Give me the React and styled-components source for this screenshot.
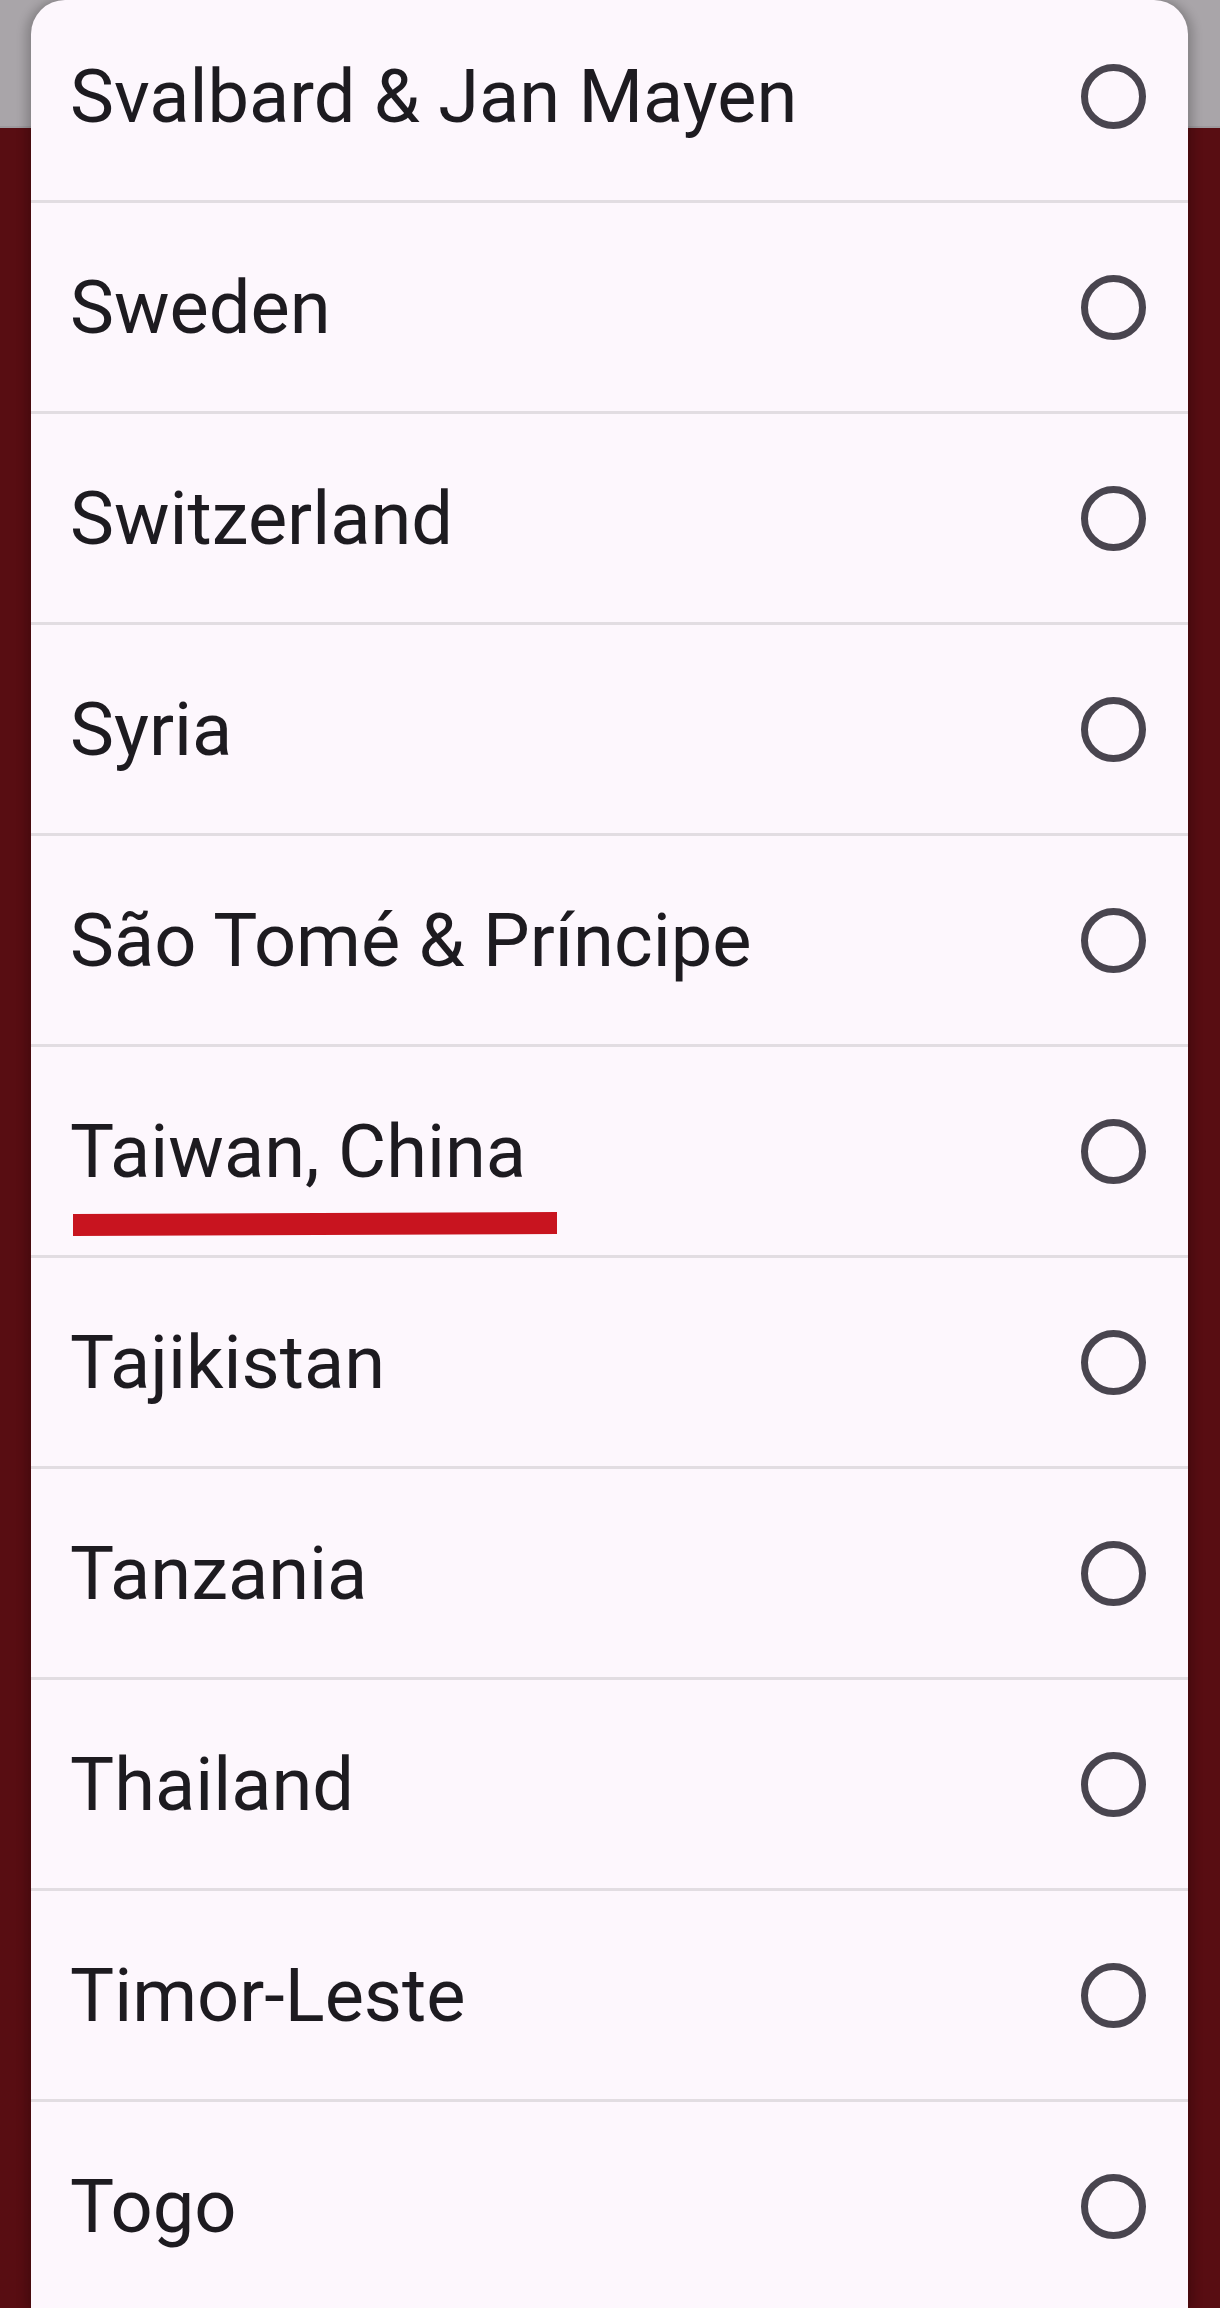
import React from "react";
import styled, { createGlobalStyle } from "styled-components";

const Global = createGlobalStyle`
  html, body { margin: 0; padding: 0; }
  body { font-family: Roboto, "Noto Sans", sans-serif; }
`;

const Page = styled.div`
  width: 1220px;
  height: 2308px;
  overflow: hidden;
  background: linear-gradient(#a9a5a9 0 126px, #9e9a9e 126px 128px, #580d12 128px);
  padding: 0 32px 0 31px;
  box-sizing: border-box;
`;

const Sheet = styled.div`
  background: #fdf7fd;
  height: 100%;
  border-radius: 34px 34px 0 0;
  overflow: hidden;
  box-shadow: -6px 0 10px rgba(0, 0, 0, 0.18), 6px 0 10px rgba(0, 0, 0, 0.18);
`;

const List = styled.ul`
  list-style: none;
  margin: -8px 0 0;
  padding: 0;
`;

const Row = styled.li`
  position: relative;
  height: 208px;
  border-bottom: 3px solid #e2dde2;
  display: flex;
  align-items: center;
  justify-content: space-between;
  padding: 0 42px 0 39px;
`;

const Label = styled.span`
  font-family: Roboto, "Noto Sans", sans-serif;
  font-size: 74px;
  color: #1d1b20;
  letter-spacing: 0;
`;

const Radio = styled.span`
  width: 65px;
  height: 65px;
  border-radius: 50%;
  border: 7px solid #49454f;
  box-sizing: border-box;
  flex: none;
`;

const Mark = styled.svg`
  position: absolute;
  left: 42px;
  top: 165px;
  width: 484px;
  height: 24px;
`;

const countries = [
  "Svalbard & Jan Mayen",
  "Sweden",
  "Switzerland",
  "Syria",
  "São Tomé & Príncipe",
  "Taiwan, China",
  "Tajikistan",
  "Tanzania",
  "Thailand",
  "Timor-Leste",
  "Togo",
];

export default function App() {
  return (
    <>
      <Global />
      <Page>
        <Sheet>
          <List>
            {countries.map((c) => (
              <Row key={c}>
                <Label>{c}</Label>
                <Radio />
                {c === "Taiwan, China" && (
                  <Mark viewBox="0 0 484 24">
                    <polygon points="0,2 484,0 484,22 0,24" fill="#c8141f" />
                  </Mark>
                )}
              </Row>
            ))}
          </List>
        </Sheet>
      </Page>
    </>
  );
}
